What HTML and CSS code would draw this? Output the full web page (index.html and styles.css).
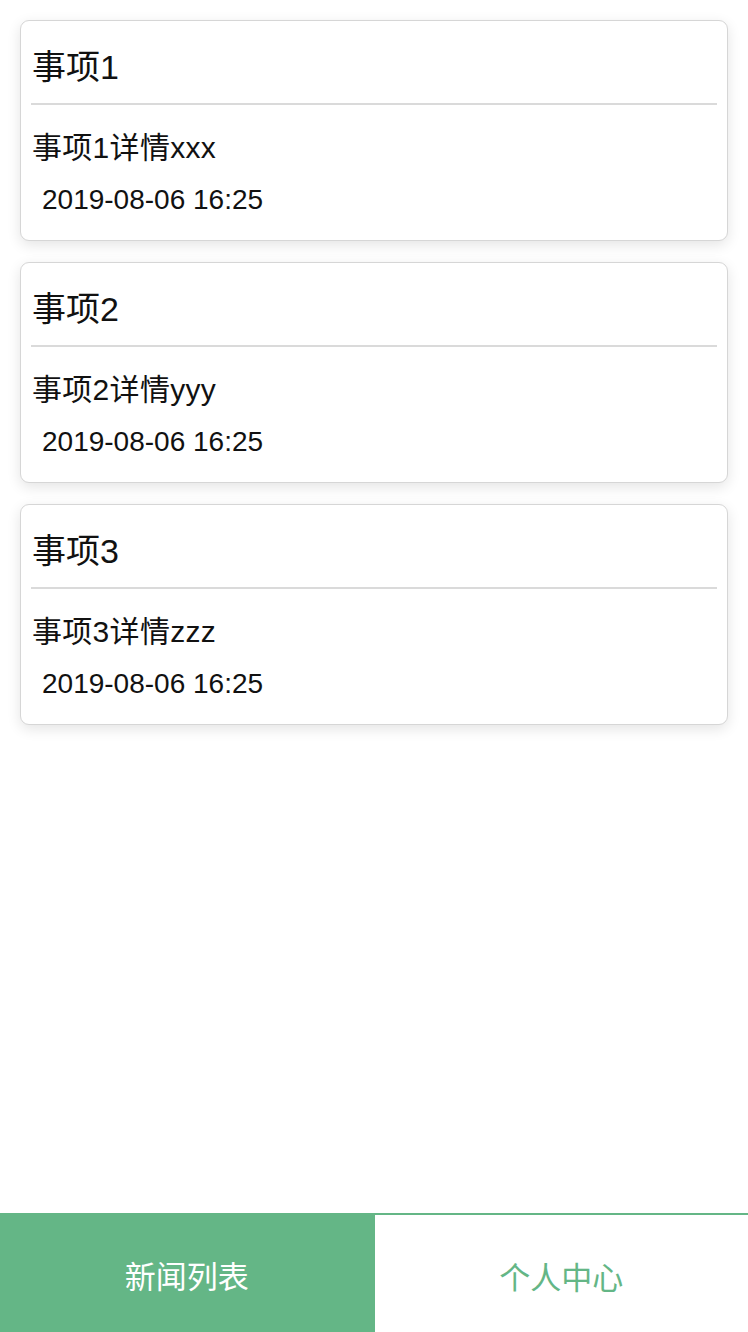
FILE: index.html
```html
<!DOCTYPE html>
<html lang="zh">
<head>
<meta charset="utf-8">
<link rel="stylesheet" href="styles.css">
</head>
<body>
<div class="app">
  <main class="list">
    <div class="card">
      <div class="card-title">事项1</div>
      <div class="card-detail">事项1详情xxx</div>
      <div class="card-date">2019-08-06 16:25</div>
    </div>
    <div class="card">
      <div class="card-title">事项2</div>
      <div class="card-detail">事项2详情yyy</div>
      <div class="card-date">2019-08-06 16:25</div>
    </div>
    <div class="card">
      <div class="card-title">事项3</div>
      <div class="card-detail">事项3详情zzz</div>
      <div class="card-date">2019-08-06 16:25</div>
    </div>
  </main>
  <nav class="tabbar">
    <div class="tab tab-active">新闻列表</div>
    <div class="tab tab-idle">个人中心</div>
  </nav>
</div>
</body>
</html>
```
FILE: styles.css
```css
html, body {
  margin: 0;
  padding: 0;
  background: #ffffff;
}
body {
  font-family: "Liberation Sans", "Noto Sans CJK SC", sans-serif;
  color: #111111;
}
.app {
  display: flex;
  flex-direction: column;
  height: 100vh;
}
.list {
  flex: 1;
  display: flex;
  flex-direction: column;
  gap: 21px;
  padding: 20px 20px 0 20px;
}
.card {
  border: 1px solid #d6d6d6;
  border-radius: 9px;
  background: #ffffff;
  box-shadow: 0 4px 14px rgba(0, 0, 0, 0.11);
  padding: 0 10px 22px 10px;
}
.card-title {
  font-size: 34px;
  line-height: 48px;
  padding: 22px 0 12px 1px;
  border-bottom: 2px solid #dadada;
}
.card-detail {
  font-size: 30px;
  line-height: 40px;
  margin-top: 23px;
  padding-left: 1px;
  letter-spacing: 0.3px;
}
.card-date {
  font-size: 28px;
  line-height: 36px;
  margin-top: 14px;
  padding-left: 11px;
}
.tabbar {
  display: flex;
  height: 119px;
}
.tab {
  flex: 1;
  display: flex;
  align-items: center;
  justify-content: center;
  font-size: 31px;
  padding-top: 4px;
  box-sizing: border-box;
}
.tab-active {
  background: #64b686;
  color: #ffffff;
}
.tab-idle {
  background: #ffffff;
  color: #64b686;
  border-top: 2px solid #64b686;
  border-left: 1px solid #64b686;
}
```
